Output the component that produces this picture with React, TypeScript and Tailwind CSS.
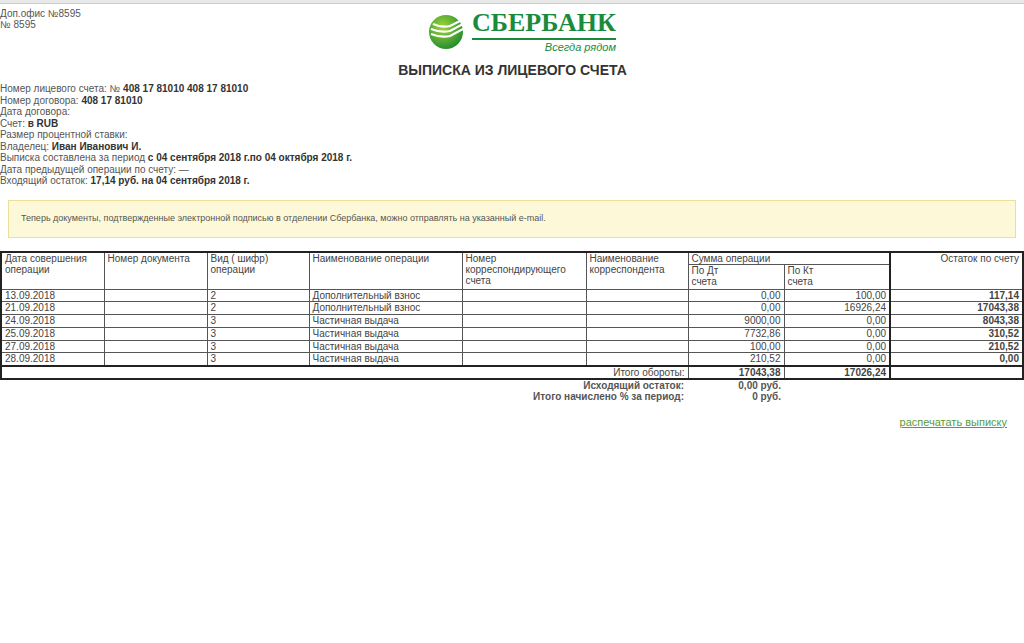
const rows = [
  ["13.09.2018", "2", "Дополнительный взнос", "0,00", "100,00", "117,14"],
  ["21.09.2018", "2", "Дополнительный взнос", "0,00", "16926,24", "17043,38"],
  ["24.09.2018", "3", "Частичная выдача", "9000,00", "0,00", "8043,38"],
  ["25.09.2018", "3", "Частичная выдача", "7732,86", "0,00", "310,52"],
  ["27.09.2018", "3", "Частичная выдача", "100,00", "0,00", "210,52"],
  ["28.09.2018", "3", "Частичная выдача", "210,52", "0,00", "0,00"],
];

const Cols = () => (
  <colgroup>
    <col className="w-[103px]" />
    <col className="w-[103px]" />
    <col className="w-[102px]" />
    <col className="w-[153px]" />
    <col className="w-[124px]" />
    <col className="w-[102px]" />
    <col className="w-[96px]" />
    <col className="w-[106px]" />
    <col />
  </colgroup>
);

const Logo = () => (
  <div className="flex items-center gap-2">
    <svg width="36" height="36" viewBox="0 0 36 36">
      <defs>
        <radialGradient id="g" cx="40%" cy="35%" r="70%">
          <stop offset="0" stopColor="#9fd63a" />
          <stop offset="1" stopColor="#1f8a2e" />
        </radialGradient>
      </defs>
      <circle cx="18" cy="18" r="17" fill="url(#g)" />
      <path d="M5 10 Q14 14 22 12 L34 6" stroke="#fff" strokeWidth="2.2" fill="none" />
      <path d="M3 15 Q13 19 22 17 L35 10" stroke="#fff" strokeWidth="2.2" fill="none" />
      <path d="M3 20 Q13 24 22 22 L35 15" stroke="#fff" strokeWidth="2.2" fill="none" />
    </svg>
    <div className="flex flex-col items-end">
      <div className="text-[26px] leading-[27px] font-bold text-[#1a8a3c] border-b-2 border-[#1a8a3c] pb-[2px]" style={{ fontFamily: '"Liberation Serif", serif' }}>
        СБЕРБАНК
      </div>
      <div className="text-[11px] italic text-[#1a8a3c] leading-[14px]">Всегда рядом</div>
    </div>
  </div>
);

export default function App() {
  const td = "border border-[#555] px-[3px] leading-[11px] text-[10px] text-[#444] align-top";
  return (
    <div className="w-[1024px] h-[643px] bg-white overflow-hidden text-[#444]" style={{ fontFamily: '"Liberation Sans", Arial, sans-serif' }}>
      <div className="h-[4px] bg-[#e8e8e8] border-b border-[#ccc]" />
      <div className="relative">
        <div className="absolute left-0 top-[4px] text-[10px] leading-[11px] text-[#555]">
          <div>Доп.офис №8595</div>
          <div>№ 8595</div>
        </div>
        <div className="flex justify-center pt-[5px] pl-[20px]">
          <Logo />
        </div>
      </div>
      <div className="text-center font-bold text-[14px] text-[#333] mt-[6px] pl-[1px]">ВЫПИСКА ИЗ ЛИЦЕВОГО СЧЕТА</div>
      <div className="mt-[2px] text-[10px] leading-[11.5px] text-[#555]">
        <div>Номер лицевого счета: № <b className="text-[#333]">408 17 81010 408 17 81010</b></div>
        <div>Номер договора: <b className="text-[#333]">408 17 81010</b></div>
        <div>Дата договора:</div>
        <div>Счет: <b className="text-[#333]">в RUB</b></div>
        <div>Размер процентной ставки:</div>
        <div>Владелец: <b className="text-[#333]">Иван Иванович И.</b></div>
        <div>Выписка составлена за период <b className="text-[#333]">с 04 сентября 2018 г.по 04 октября 2018 г.</b></div>
        <div>Дата предыдущей операции по счету: —</div>
        <div>Входящий остаток: <b className="text-[#333]">17,14 руб. на 04 сентября 2018 г.</b></div>
      </div>
      <div className="mx-[8px] mt-[13px] h-[38px] bg-[#fdf9d8] border border-[#ecdf9a] flex items-center px-[12px] text-[9px] text-[#555]">
        Теперь документы, подтвержденные электронной подписью в отделении Сбербанка, можно отправлять на указанный e-mail.
      </div>
      <table className="mt-[13px] w-[1024px] table-fixed border-collapse border-2 border-[#222]">
        <Cols />
        <tbody>
          <tr>
            <td rowSpan={2} className={td}>Дата совершения операции</td>
            <td rowSpan={2} className={td}>Номер документа</td>
            <td rowSpan={2} className={td}>Вид ( шифр) операции</td>
            <td rowSpan={2} className={td}>Наименование операции</td>
            <td rowSpan={2} className={td}>Номер корреспондирующего счета</td>
            <td rowSpan={2} className={td}>Наименование корреспондента</td>
            <td colSpan={2} className={td}>Сумма операции</td>
            <td rowSpan={2} className={`${td} text-right border-l-2 border-l-[#222]`}>Остаток по счету</td>
          </tr>
          <tr className="h-[25px]">
            <td className={td}>По Дт<br />счета</td>
            <td className={td}>По Кт<br />счета</td>
          </tr>
          {rows.map((r) => (
            <tr key={r[0]} className="h-[12.8px]">
              <td className={td}>{r[0]}</td>
              <td className={td}></td>
              <td className={td}>{r[1]}</td>
              <td className={td}>{r[2]}</td>
              <td className={td}></td>
              <td className={td}></td>
              <td className={`${td} text-right`}>{r[3]}</td>
              <td className={`${td} text-right`}>{r[4]}</td>
              <td className={`${td} text-right font-bold text-[#222] border-l-2 border-l-[#222]`}>{r[5]}</td>
            </tr>
          ))}
          <tr className="h-[13px] border-t-2 border-[#222]">
            <td colSpan={6} className={`${td} text-right`}>Итого обороты:</td>
            <td className={`${td} text-right font-bold text-[#222]`}>17043,38</td>
            <td className={`${td} text-right font-bold text-[#222]`}>17026,24</td>
            <td className={`${td} border-l-2 border-l-[#222]`}></td>
          </tr>
        </tbody>
      </table>
      <table className="w-[1024px] table-fixed">
        <Cols />
        <tbody>
          <tr>
            <td colSpan={6} className="text-right text-[10px] leading-[11px] font-bold text-[#555] pr-[3px]">Исходящий остаток:</td>
            <td className="text-right text-[10px] leading-[11px] font-bold text-[#555] pr-[2px]">0,00 руб.</td>
          </tr>
          <tr>
            <td colSpan={6} className="text-right text-[10px] leading-[11px] font-bold text-[#555] pr-[3px]">Итого начислено % за период:</td>
            <td className="text-right text-[10px] leading-[11px] font-bold text-[#555] pr-[2px]">0 руб.</td>
          </tr>
        </tbody>
      </table>
      <div className="flex justify-end pr-[17px] mt-[12px]">
        <a className="text-[11px] text-[#5a9a3a] underline">распечатать выписку</a>
      </div>
    </div>
  );
}
